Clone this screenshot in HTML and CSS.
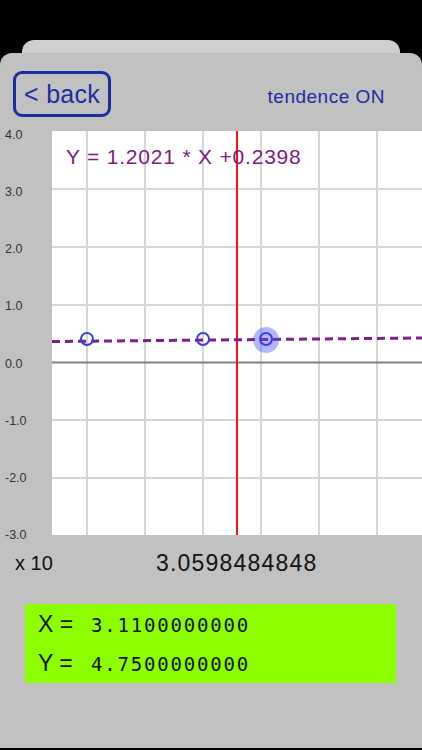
FILE: index.html
```html
<!DOCTYPE html>
<html>
<head>
<meta charset="utf-8">
<link rel="stylesheet" href="styles.css">
</head>
<body>
<div class="screen">
  <div class="back-sheet"></div>
  <div class="sheet">
    <div class="header">
      <div class="back-btn">&lt; back</div>
      <div class="tendence">tendence ON</div>
    </div>
    <div class="chart">
      <div class="ylabels">
        <span>4.0</span><span>3.0</span><span>2.0</span><span>1.0</span><span>0.0</span><span>-1.0</span><span>-2.0</span><span>-3.0</span>
      </div>
      <svg class="plot" width="370" height="404" viewBox="0 0 370 404">
        <g stroke="#d6d6d6" stroke-width="2">
          <line x1="35" y1="0" x2="35" y2="404"/>
          <line x1="93" y1="0" x2="93" y2="404"/>
          <line x1="151" y1="0" x2="151" y2="404"/>
          <line x1="209" y1="0" x2="209" y2="404"/>
          <line x1="267" y1="0" x2="267" y2="404"/>
          <line x1="325" y1="0" x2="325" y2="404"/>
          <line x1="0" y1="58" x2="370" y2="58"/>
          <line x1="0" y1="116" x2="370" y2="116"/>
          <line x1="0" y1="174" x2="370" y2="174"/>
          <line x1="0" y1="289" x2="370" y2="289"/>
          <line x1="0" y1="347" x2="370" y2="347"/>
        </g>
        <line x1="0" y1="231.5" x2="370" y2="231.5" stroke="#808080" stroke-width="2"/>
        <line x1="185" y1="0" x2="185" y2="404" stroke="#ff1010" stroke-width="2"/>
        <line x1="0" y1="210.5" x2="370" y2="207" stroke="#7e1f8c" stroke-width="3" stroke-dasharray="8 5"/>
        <circle cx="214" cy="209" r="13" fill="rgba(70,85,255,0.42)"/>
        <g fill="none" stroke="#3c3ce6" stroke-width="2">
          <circle cx="35" cy="208" r="6"/>
          <circle cx="151" cy="208" r="6"/>
          <circle cx="214" cy="208" r="6"/>
        </g>
        <text class="eq" x="14" y="33">Y = 1.2021 * X +0.2398</text>
      </svg>
    </div>
    <div class="xrow">
      <span class="scale">x 10</span>
      <span class="xval">3.0598484848</span>
    </div>
    <div class="readout">
      <div class="rline"><span class="var">X =</span><span class="num">3.1100000000</span></div>
      <div class="rline"><span class="var">Y =</span><span class="num">4.7500000000</span></div>
    </div>
  </div>
</div>
</body>
</html>
```

FILE: styles.css
```css
html, body {
  margin: 0;
  padding: 0;
  background: #000;
}
.screen {
  width: 422px;
  height: 750px;
  background: #000;
  display: flex;
  flex-direction: column;
  overflow: hidden;
  font-family: "Liberation Sans", Arial, sans-serif;
}
.back-sheet {
  margin: 40px 22px 0 22px;
  height: 13px;
  background: #cfcfcf;
  border-radius: 12px 12px 0 0;
  flex: none;
}
.sheet {
  height: 695px;
  background: #c1c1c1;
  border-radius: 12px 12px 0 0;
  display: flex;
  flex-direction: column;
  flex: none;
}
.header {
  display: flex;
  align-items: center;
  justify-content: space-between;
  padding: 18px 37px 0 13px;
  height: 46px;
}
.back-btn {
  box-sizing: border-box;
  width: 98px;
  height: 46px;
  border: 3px solid #1b2ea0;
  border-radius: 9px;
  color: #1b2ea0;
  font-size: 25px;
  letter-spacing: 0.3px;
  line-height: 40px;
  padding-left: 8px;
}
.tendence {
  color: #1b2ea0;
  font-size: 19px;
  letter-spacing: 0.5px;
  margin-top: 6px;
}
.chart {
  margin-top: 14px;
  display: flex;
  height: 404px;
}
.ylabels {
  width: 52px;
  margin: -7px 0;
  display: flex;
  flex-direction: column;
  justify-content: space-between;
  font-size: 12.5px;
  line-height: 14px;
  color: #333;
  padding-left: 5px;
  box-sizing: border-box;
  padding-top: 4px;
}
.plot {
  display: block;
  background: #fff;
}
.eq {
  font-family: "Liberation Sans", Arial, sans-serif;
  font-size: 21px;
  letter-spacing: 0.8px;
  fill: #7d1b80;
}
.xrow {
  height: 56px;
  display: flex;
  align-items: center;
  font-size: 20px;
  color: #111;
}
.scale {
  margin-left: 15px;
  width: 141px;
}
.xval {
  font-size: 23px;
  letter-spacing: 1.2px;
}
.readout {
  margin: 13px 26px 0 25px;
  height: 79px;
  background: #8cfe00;
  box-sizing: border-box;
  padding: 1px 0 0 13px;
  display: flex;
  flex-direction: column;
}
.rline {
  display: flex;
  align-items: center;
  height: 39px;
}
.var {
  font-size: 23px;
  width: 53px;
  color: #111;
}
.num {
  font-family: "DejaVu Sans Mono", "Liberation Mono", monospace;
  font-size: 19px;
  letter-spacing: 1.8px;
  color: #111;
}
```
